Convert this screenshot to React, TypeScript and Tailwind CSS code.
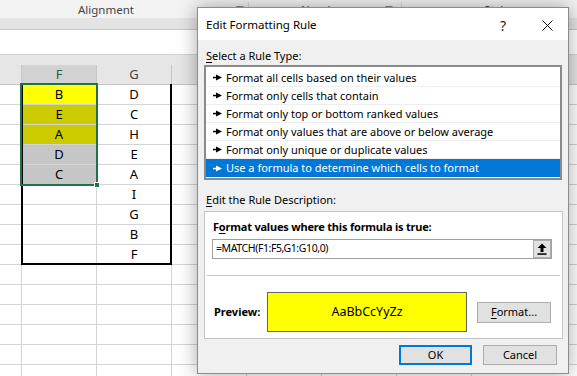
import React from 'react';

const ruleTypes = [
  'Format all cells based on their values',
  'Format only cells that contain',
  'Format only top or bottom ranked values',
  'Format only values that are above or below average',
  'Format only unique or duplicate values',
  'Use a formula to determine which cells to format',
];

// F and G column contents, row by row
const rows: { f: string; g: string; fill?: string }[] = [
  { f: 'B', g: 'D', fill: 'bg-[#ffff00]' },
  { f: 'E', g: 'C', fill: 'bg-[#cbcb00]' },
  { f: 'A', g: 'H', fill: 'bg-[#cbcb00]' },
  { f: 'D', g: 'E', fill: 'bg-[#c6c6c6]' },
  { f: 'C', g: 'A', fill: 'bg-[#c6c6c6]' },
  { f: '', g: 'I' },
  { f: '', g: 'G' },
  { f: '', g: 'B' },
  { f: '', g: 'F' },
  { f: '', g: '' },
  { f: '', g: '' },
  { f: '', g: '' },
  { f: '', g: '' },
  { f: '', g: '' },
  { f: '', g: '' },
];

function RuleArrow({ light }: { light?: boolean }) {
  return (
    <svg width="9" height="7" viewBox="0 0 9 7" className="shrink-0">
      <rect x="0" y="2.8" width="4" height="1.5" fill={light ? '#fff' : '#000'} />
      <polygon points="3,0.5 9,3.5 3,6.5" fill={light ? '#fff' : '#000'} />
    </svg>
  );
}

function Launcher() {
  return (
    <svg width="8" height="8" viewBox="0 0 8 8" className="shrink-0">
      <path d="M0.5 7.5V0.5H7.5" fill="none" stroke="#8a8a8a" strokeWidth="1" />
      <path d="M3 3L7 7M7 4V7H4" fill="none" stroke="#8a8a8a" strokeWidth="1" />
    </svg>
  );
}

function Spreadsheet() {
  return (
    <div className="flex flex-col">
      {/* Ribbon group labels */}
      <div className="flex h-[18px] bg-[#f3f3f3] pt-[2px] text-[11.5px] leading-[16px] text-[#444]">
        <div className="flex w-[249px] items-center justify-between border-r border-[#dadada] pl-[78px] pr-[4px]">
          <span>Alignment</span>
          <Launcher />
        </div>
        <div className="flex w-[153px] items-center justify-between border-r border-[#dadada] pl-[52px] pr-[8px]">
          <span>Number</span>
          <Launcher />
        </div>
        <div className="flex flex-1 items-center pl-[82px]">
          <span>Styles</span>
        </div>
      </div>
      <div className="h-[12px] border-b border-[#c6c6c6] bg-[#e4e4e4]" />
      <div className="h-[25px] border-b border-[#d4d4d4] bg-white" />
      <div className="h-[10px] bg-[#e6e6e6]" />

      {/* Column headers */}
      <div className="flex h-[20px] border-b border-[#c6c6c6] bg-[#e6e6e6] text-[13px] leading-[19px] text-[#444]">
        <div className="w-[22px] border-r border-[#c6c6c6]" />
        <div className="w-[75px] border-r border-[#c6c6c6] bg-[#d2d2d2] text-center text-[#2b5a40]">F</div>
        <div className="w-[75px] border-r border-[#c6c6c6] text-center">G</div>
        <div className="w-[75px] border-r border-[#c6c6c6]" />
        <div className="w-[75px] border-r border-[#c6c6c6]" />
        <div className="w-[75px] border-r border-[#c6c6c6]" />
        <div className="w-[75px] border-r border-[#c6c6c6]" />
        <div className="flex-1" />
      </div>

      {/* Cells */}
      <div className="relative">
        {rows.map((r, i) => (
          <div key={i} className="flex h-[20px] border-b border-[#d4d4d4] text-[13px] leading-[19px] text-black">
            <div className="w-[22px] border-r border-[#d4d4d4]" />
            <div className={`w-[75px] border-r border-[#d4d4d4] text-center ${r.fill ?? ''}`}>{r.f}</div>
            <div className="w-[75px] border-r border-[#d4d4d4] text-center">{r.g}</div>
            <div className="w-[75px] border-r border-[#d4d4d4]" />
            <div className="w-[75px] border-r border-[#d4d4d4]" />
            <div className="w-[75px] border-r border-[#d4d4d4]" />
            <div className="w-[75px] border-r border-[#d4d4d4]" />
            <div className="flex-1" />
          </div>
        ))}

        {/* Thick outside border around F1:G9 */}
        <div className="pointer-events-none absolute left-[21px] top-[-1px] h-[181px] w-[151px] border-x-2 border-b-2 border-black" />

        {/* Selection F1:F5 */}
        <div className="pointer-events-none absolute left-[20px] top-[-2px] h-[103px] w-[78px] border-2 border-[#217346]" />
        <div className="pointer-events-none absolute left-[94px] top-[97px] h-[6px] w-[6px] border border-white bg-[#217346]" />
      </div>
    </div>
  );
}

function EditRuleDialog() {
  return (
    <div className="absolute left-[197px] top-[7px] flex h-[367px] w-[372px] flex-col border border-[#8c8c8c] bg-[#f0f0f0] text-[11px] text-black shadow-[0_0_18px_rgba(0,0,0,0.35)]">
      {/* Title bar */}
      <div className="flex h-[32px] items-center bg-white pl-[8px] pr-[15px] pt-[2px]">
        <span className="text-[11.5px]">Edit Formatting Rule</span>
        <span className="ml-auto mr-[36px] text-[14px] text-[#222]">?</span>
        <svg width="11" height="11" viewBox="0 0 11 11">
          <path d="M0.5 0.5L10.5 10.5M10.5 0.5L0.5 10.5" stroke="#111" strokeWidth="1" />
        </svg>
      </div>

      <div className="flex flex-1 flex-col px-[6px]">
        <div className="mt-[8px] h-[16px] pl-[2px] leading-[16px]">
          <span className="underline underline-offset-2">S</span>elect a Rule Type:
        </div>

        {/* Rule type list */}
        <div className="mt-[1px] w-[358px] border-2 border-[#8a8a8a] bg-white pt-[2px] pb-[1px]">
          {ruleTypes.map((t, i) => {
            const selected = i === ruleTypes.length - 1;
            return (
              <div
                key={t}
                className={`flex h-[18px] items-center gap-[4px] pl-[7px] leading-[18px] ${
                  selected ? 'bg-[#0078d7] text-white' : 'border-b border-[#efefef]'
                }`}
              >
                <RuleArrow light={selected} />
                <span>{t}</span>
              </div>
            );
          })}
        </div>

        <div className="mt-[12px] h-[16px] pl-[2px] leading-[16px]">
          <span className="underline underline-offset-2">E</span>dit the Rule Description:
        </div>

        {/* Rule description */}
        <div className="mt-[3px] flex h-[128px] w-[359px] flex-col border border-[#c4c4c4] bg-white">
          <div className="mt-[7px] h-[16px] pl-[8px] font-bold leading-[16px] tracking-[-0.2px]">
            F<span className="underline underline-offset-2">o</span>rmat values where this formula is true:
          </div>
          <div className="ml-[7px] mt-[4px] flex h-[20px] w-[340px] items-center border border-[#a0a0a0] bg-white pl-[3px]">
            <span className="text-[10.5px] tracking-[-0.4px]">=MATCH(F1:F5,G1:G10,0)</span>
            <div className="ml-auto flex h-[18px] w-[18px] items-center justify-center border border-[#adadad] bg-[#e1e1e1]">
              <svg width="10" height="12" viewBox="0 0 10 12">
                <polygon points="5,0.5 9.5,5 6.5,5 6.5,9 3.5,9 3.5,5 0.5,5" fill="#000" />
                <rect x="0.5" y="10.3" width="9" height="1.5" fill="#000" />
              </svg>
            </div>
          </div>
          <div className="mx-[2px] mt-[16px] h-px bg-[#c8c8c8]" />
          <div className="mt-[16px] flex items-center pl-[9px]">
            <span className="w-[53px] font-bold">Preview:</span>
            <div className="flex h-[40px] w-[200px] items-center justify-center border border-[#646464] bg-[#ffff00] text-[12.5px]">
              AaBbCcYyZz
            </div>
            <div className="ml-[10px] flex h-[21px] w-[74px] items-center justify-center border border-[#adadad] bg-[#e1e1e1]">
              <span className="underline underline-offset-2">F</span>ormat...
            </div>
          </div>
        </div>

        {/* Dialog buttons */}
        <div className="mt-[6px] flex justify-end gap-[11px] pr-[5px]">
          <div className="flex h-[20px] w-[73px] items-center justify-center border-2 border-[#0078d7] bg-[#e1e1e1]">OK</div>
          <div className="flex h-[20px] w-[74px] items-center justify-center border border-[#adadad] bg-[#e1e1e1]">Cancel</div>
        </div>
      </div>
    </div>
  );
}

export default function App() {
  return (
    <div className="relative h-[376px] w-[577px] overflow-hidden bg-white font-['Noto_Sans',sans-serif]">
      <Spreadsheet />
      <EditRuleDialog />
    </div>
  );
}
